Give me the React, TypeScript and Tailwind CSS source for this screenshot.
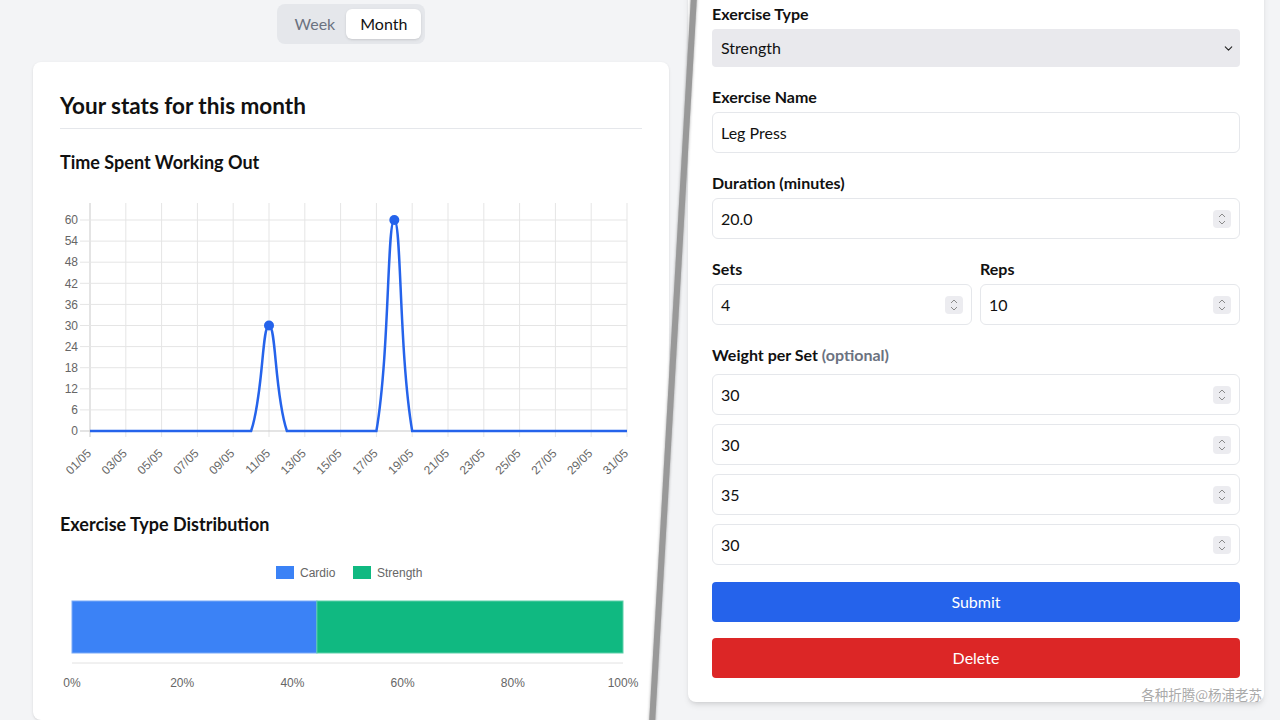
import { ChevronDown } from "lucide-react";

type Pt = { x: number; y: number };

const UI_FONT = "font-['Lato','Noto_Sans',sans-serif]";
const CHART_FONT = "'Liberation Sans', Arial, sans-serif";

// time spent per day of May (minutes)
const minutes: number[] = Array.from({ length: 31 }, (_, i) =>
  i + 1 === 11 ? 30 : i + 1 === 18 ? 60 : 0
);

const xFor = (day: number) => 30 + (day - 1) * 17.9;
const yFor = (v: number) => 245 - (v * 211) / 60;

// chart.js-ish spline with tension 0.4, control points capped to the area
const buildPath = (pts: Pt[], top: number, bottom: number) => {
  const t = 0.4;
  const cps = pts.map((cur, i) => {
    const prev = pts[i - 1] || cur;
    const next = pts[i + 1] || cur;
    const d01 = Math.hypot(cur.x - prev.x, cur.y - prev.y);
    const d12 = Math.hypot(next.x - cur.x, next.y - cur.y);
    let s01 = d01 / (d01 + d12);
    let s12 = d12 / (d01 + d12);
    if (isNaN(s01)) s01 = 0;
    if (isNaN(s12)) s12 = 0;
    const fa = t * s01;
    const fb = t * s12;
    const clamp = (y: number) => Math.max(top, Math.min(bottom, y));
    return {
      prev: { x: cur.x - fa * (next.x - prev.x), y: clamp(cur.y - fa * (next.y - prev.y)) },
      next: { x: cur.x + fb * (next.x - prev.x), y: clamp(cur.y + fb * (next.y - prev.y)) },
    };
  });
  let d = `M${pts[0].x},${pts[0].y}`;
  for (let i = 1; i < pts.length; i++) {
    const a = cps[i - 1].next;
    const b = cps[i].prev;
    d += ` C${a.x},${a.y} ${b.x},${b.y} ${pts[i].x},${pts[i].y}`;
  }
  return d;
};

const LineChart = () => {
  const pts = minutes.map((v, i) => ({ x: xFor(i + 1), y: yFor(v) }));
  const yTicks = [0, 6, 12, 18, 24, 30, 36, 42, 48, 54, 60];
  const xTicks = Array.from({ length: 16 }, (_, i) => i * 2 + 1);
  return (
    <svg width="582" height="300" className="block" style={{ fontFamily: CHART_FONT }}>
      {xTicks.map((d) => (
        <line key={d} x1={xFor(d)} x2={xFor(d)} y1={17} y2={251} stroke={d === 1 ? "#c9c9c9" : "#e5e5e5"} />
      ))}
      {yTicks.map((v) => (
        <line key={v} x1={20} x2={567} y1={yFor(v)} y2={yFor(v)} stroke={v === 0 ? "#c9c9c9" : "#e5e5e5"} />
      ))}
      {yTicks.map((v) => (
        <text key={v} x={18} y={yFor(v)} dy="0.35em" textAnchor="end" fontSize="12" fill="#666">
          {v}
        </text>
      ))}
      {xTicks.map((d) => (
        <text
          key={d}
          transform={`translate(${xFor(d) - 1},${265}) rotate(-45)`}
          textAnchor="end"
          dy="0.35em"
          fontSize="12"
          fill="#666"
        >
          {String(d).padStart(2, "0")}/05
        </text>
      ))}
      <path d={buildPath(pts, 17, 245)} fill="none" stroke="#2563eb" strokeWidth="2.5" />
      {pts.map((p, i) =>
        minutes[i] > 0 ? <circle key={i} cx={p.x} cy={p.y} r="5" fill="#2563eb" /> : null
      )}
    </svg>
  );
};

const BarChart = () => {
  const cardio = 4 / 9;
  const left = 12;
  const width = 551;
  const split = left + width * cardio;
  return (
    <svg width="582" height="170" className="block" style={{ fontFamily: CHART_FONT }}>
      <rect x={216} y={16} width={18} height={13} fill="#3b82f6" />
      <text x={240} y={22.5} dy="0.35em" fontSize="12" fill="#666">
        Cardio
      </text>
      <rect x={293} y={16} width={18} height={13} fill="#10b981" />
      <text x={317} y={22.5} dy="0.35em" fontSize="12" fill="#666">
        Strength
      </text>
      <rect x={left} y={51} width={split - left} height={52} fill="#3b82f6" stroke="#7aaaf8" strokeWidth="1" />
      <rect x={split} y={51} width={left + width - split} height={52} fill="#10b981" stroke="#5fd0aa" strokeWidth="1" />
      <line x1={left} x2={left + width} y1={113} y2={113} stroke="#e2e2e2" />
      {[0, 20, 40, 60, 80, 100].map((p, i) => (
        <text key={p} x={left + i * 110.2} y={133} dy="0.35em" textAnchor="middle" fontSize="12" fill="#666">
          {p}%
        </text>
      ))}
    </svg>
  );
};

const Spinner = () => (
  <span className="w-[18px] h-[18px] bg-[#ececf0] rounded-sm flex flex-col items-center justify-center">
    <svg width="10" height="14" viewBox="0 0 10 14" fill="none" stroke="#8a8a8a" strokeWidth="1">
      <path d="M2 5 L5 2 L8 5" />
      <path d="M2 9 L5 12 L8 9" />
    </svg>
  </span>
);

const Field = ({ value, spin }: { value: string; spin?: boolean }) => (
  <div className="h-[41px] w-full border border-[#e5e7eb] rounded-md pl-2 pr-[8px] flex items-center justify-between bg-white">
    <span className="text-[16px] text-[#111]">{value}</span>
    {spin && <Spinner />}
  </div>
);

const Label = ({ children }: { children: React.ReactNode }) => (
  <div className="text-[16px] leading-5 font-bold text-[#111] mb-[5px]">{children}</div>
);

export default function App() {
  return (
    <div className={`w-[1280px] h-[720px] bg-[#f3f4f6] relative overflow-hidden flex ${UI_FONT}`}>
      {/* left screenshot */}
      <div className="w-[702px] shrink-0 h-full flex flex-col items-center pt-1 [clip-path:polygon(0_0,697px_0,651px_720px,0_720px)]">
        <div className="flex bg-[#e5e7eb] rounded-lg px-1 py-[5px]">
          <button className="pl-[14px] pr-[11px] h-[30px] rounded-md text-[16px] text-[#6b7280]">Week</button>
          <button className="px-[14px] h-[30px] rounded-md text-[16px] text-[#111] bg-white shadow-sm">Month</button>
        </div>
        <div className="mt-[18px] w-[636px] flex-1 bg-white rounded-lg shadow-sm px-[27px] pt-[30px]">
          <h2 className="text-[22.5px] leading-7 font-bold text-[#111] pb-2 border-b border-[#e5e7eb]">
            Your stats for this month
          </h2>
          <h3 className="mt-[21px] text-[18px] leading-6 font-bold text-[#111]">Time Spent Working Out</h3>
          <div className="mt-[12px]">
            <LineChart />
          </div>
          <h3 className="mt-[26px] text-[18px] leading-6 font-bold text-[#111]">Exercise Type Distribution</h3>
          <div className="mt-[14px]">
            <BarChart />
          </div>
        </div>
      </div>

      {/* right screenshot */}
      <div className="flex-1 -ml-[14px]">
        <div className="-mt-[20px] w-[576px] bg-white rounded-lg shadow-md px-6 pt-6 pb-6">
          <Label>Exercise Type</Label>
          <div className="h-[38px] bg-[#e9e9ed] rounded flex items-center justify-between pl-[9px] pr-[5px]">
            <span className="text-[16px] text-[#111]">Strength</span>
            <ChevronDown size={13} strokeWidth={2} className="text-[#222]" />
          </div>

          <div className="mt-5">
            <Label>Exercise Name</Label>
            <Field value="Leg Press" />
          </div>

          <div className="mt-5">
            <Label>Duration (minutes)</Label>
            <Field value="20.0" spin />
          </div>

          <div className="mt-5 grid grid-cols-2 gap-2">
            <div>
              <Label>Sets</Label>
              <Field value="4" spin />
            </div>
            <div>
              <Label>Reps</Label>
              <Field value="10" spin />
            </div>
          </div>

          <div className="mt-5">
            <div className="text-[16px] leading-5 font-bold text-[#111] mb-[9px]">
              Weight per Set <span className="text-[#6b7280]">(optional)</span>
            </div>
            <div className="flex flex-col gap-[9px]">
              {["30", "30", "35", "30"].map((w, i) => (
                <Field key={i} value={w} spin />
              ))}
            </div>
          </div>

          <button className="mt-[17px] w-full h-[40px] rounded bg-[#2563eb] text-white text-[16px]">Submit</button>
          <button className="mt-4 w-full h-[40px] rounded bg-[#dc2626] text-white text-[16px]">Delete</button>
        </div>
      </div>

      {/* slanted seam between the two shots */}
      <div className="absolute left-[670px] -top-[40px] w-[6px] h-[800px] bg-[#999] rotate-[3.3deg] shadow-[0_0_3px_rgba(0,0,0,0.35)]" />

      <div className="absolute right-[18px] bottom-[18px] text-[13.5px] leading-4 text-[#aaa] font-['Noto_Sans_CJK_SC',sans-serif]">
        各种折腾@杨浦老苏
      </div>
    </div>
  );
}
